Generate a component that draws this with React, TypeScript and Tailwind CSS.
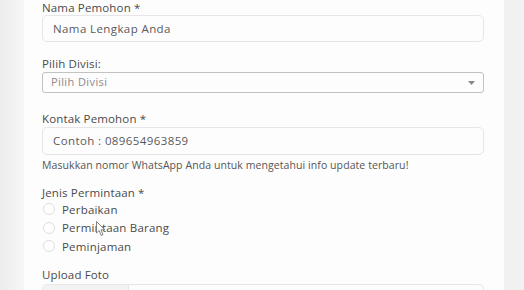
import React from "react";

function Radio({ label }: { label: string }) {
  return (
    <label className="flex items-center h-[18.5px]">
      <span className="w-[12px] h-[12px] rounded-full border border-[#dedede] bg-white ml-[1px]" />
      <span className="ml-[7px] text-[11.5px] text-[#4a4a4a] tracking-[0.2px]">{label}</span>
    </label>
  );
}

export default function App() {
  return (
    <div
      className="relative flex w-[524px] h-[290px] overflow-hidden bg-[#f1f1f1]"
      style={{ fontFamily: '"Open Sans", "Liberation Sans", sans-serif' }}
    >
      <div className="w-[24px] shrink-0 bg-gradient-to-r from-[#ececec] to-[#f7f7f7]" />
      <div className="w-[480px] shrink-0 bg-[#fdfdfd] pl-[18px] pr-[20px] text-[#4a4a4a]">
        <div className="pt-[1px] text-[11.5px] leading-[14px] h-[15px] tracking-[0.15px]">Nama Pemohon *</div>
        <div className="h-[27px] border border-[#e6e6e6] rounded-[5px] flex items-center pl-[10px] text-[11.5px] text-[#5a5a5a] tracking-[0.4px] bg-[#fdfdfd]">
          Nama Lengkap Anda
        </div>
        <div className="mt-[15px] text-[11.5px] leading-[14px] h-[15px] tracking-[0.15px]">Pilih Divisi:</div>
        <div className="h-[21px] border border-[#c2c2c2] rounded-[3px] flex items-center justify-between pl-[8px] pr-[8px] text-[11px] text-[#8a8a8a] tracking-[0.4px]">
          <span>Pilih Divisi</span>
          <svg width="7" height="4" viewBox="0 0 7 4"><path d="M0 0h7L3.5 4z" fill="#888" /></svg>
        </div>
        <div className="mt-[19px] text-[11.5px] leading-[14px] h-[15px] tracking-[0.15px]">Kontak Pemohon *</div>
        <div className="h-[28px] border border-[#e6e6e6] rounded-[5px] flex items-center pl-[10px] text-[11.5px] text-[#5a5a5a] tracking-[0.4px]">
          Contoh : 089654963859
        </div>
        <div className="mt-[3px] text-[10.5px] leading-[14px] text-[#555] tracking-[0.08px]">
          Masukkan nomor WhatsApp Anda untuk mengetahui info update terbaru!
        </div>
        <div className="mt-[14px] text-[11.5px] leading-[14px] tracking-[0.15px]">Jenis Permintaan *</div>
        <div className="flex flex-col">
          <Radio label="Perbaikan" />
          <Radio label="Permintaan Barang" />
          <Radio label="Peminjaman" />
        </div>
        <div className="mt-[12px] text-[11.5px] leading-[14px] tracking-[0.15px]">Upload Foto</div>
        <div className="mt-[2px] h-[27px] border border-[#e6e6e6] rounded-[5px] flex overflow-hidden">
          <div className="w-[86px] bg-[#f3f3f3] border-r border-[#e6e6e6]" />
        </div>
      </div>
      <div className="flex-1 bg-[#f1f1f1]" />
      <svg className="absolute left-[96px] top-[221px]" width="10" height="16" viewBox="0 0 10 16">
        <path
          d="M0.5 0.5 L0.5 12 L3.2 9.5 L5.2 14.5 L7 13.7 L5 8.8 L8.8 8.8 Z"
          fill="#fff"
          stroke="#666"
          strokeWidth="0.8"
          strokeLinejoin="round"
        />
      </svg>
    </div>
  );
}
